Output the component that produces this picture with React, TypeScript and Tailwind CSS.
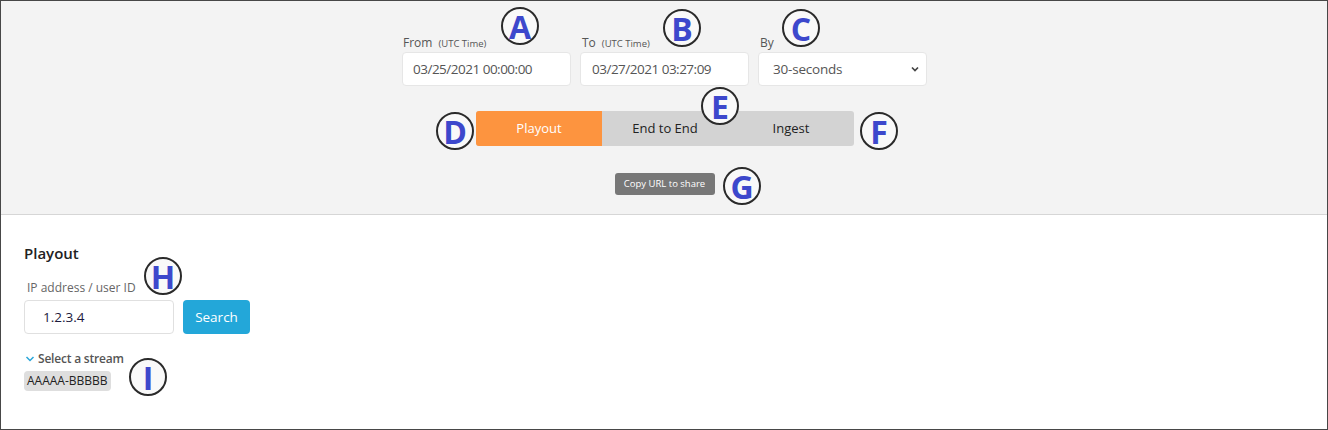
import React from "react";

const Mark = ({ l, x, y }: { l: string; x: number; y: number }) => (
  <div
    className="absolute w-[38px] h-[38px] rounded-full border-2 border-[#2a2a2a] bg-[#f9f9f9] flex items-center justify-center text-[32px] font-bold text-[#3d48cc] leading-none"
    style={{ left: x - 19, top: y - 19, fontFamily: "'Open Sans', sans-serif" }}
  >
    <span className="mt-[1px]">{l}</span>
  </div>
);

export default function App() {
  return (
    <div
      className="relative w-[1328px] h-[430px] border border-[#474747] bg-white overflow-hidden"
      style={{ fontFamily: "'Open Sans', 'Noto Sans', sans-serif" }}
    >
      <div className="h-[214px] bg-[#f3f3f3] border-b border-[#d6d6d6] flex flex-col items-center pt-[33px]">
        <div className="flex gap-[9px] ml-[1px]">
          <div className="flex flex-col w-[169px]">
            <div className="h-[18px] flex items-baseline pl-[1px] text-[#555]">
              <span className="text-[12px]">From</span>
              <span className="text-[9.5px] ml-[6px]">(UTC Time)</span>
            </div>
            <div className="h-[34px] bg-white rounded-[4px] border border-[#e6e6e6] flex items-center pl-[10px] text-[13.5px] text-[#555] tracking-[-0.5px]">
              03/25/2021 00:00:00
            </div>
          </div>
          <div className="flex flex-col w-[169px]">
            <div className="h-[18px] flex items-baseline pl-[2px] text-[#555]">
              <span className="text-[12px]">To</span>
              <span className="text-[9.5px] ml-[6px]">(UTC Time)</span>
            </div>
            <div className="h-[34px] bg-white rounded-[4px] border border-[#e6e6e6] flex items-center pl-[11px] text-[13.5px] text-[#555] tracking-[-0.5px]">
              03/27/2021 03:27:09
            </div>
          </div>
          <div className="flex flex-col w-[169px]">
            <div className="h-[18px] flex items-baseline pl-[2px] text-[#555]">
              <span className="text-[12px]">By</span>
            </div>
            <div className="h-[34px] bg-white rounded-[4px] border border-[#e6e6e6] flex items-center justify-between pl-[14px] pr-[6px] text-[13.5px] text-[#555] tracking-[-0.2px]">
              <span>30-seconds</span>
              <svg width="10" height="10" viewBox="0 0 10 10">
                <path d="M2 3.5 L5 6.5 L8 3.5" stroke="#444" strokeWidth="1.7" fill="none" />
              </svg>
            </div>
          </div>
        </div>
        <div className="mt-[25px] flex w-[378px] h-[35px] rounded-[3px] overflow-hidden bg-[#d3d3d3] text-[13px] ml-[2px]">
          <div className="w-[126px] bg-[#fd943f] text-white flex items-center justify-center">Playout</div>
          <div className="w-[126px] text-[#222] flex items-center justify-center">End to End</div>
          <div className="w-[126px] text-[#222] flex items-center justify-center">Ingest</div>
        </div>
        <div className="mt-[27px] h-[22px] w-[100px] rounded-[3px] bg-[#777] text-white text-[9.5px] flex items-center justify-center ml-[1px]">
          Copy URL to share
        </div>
      </div>
      <div className="pl-[23px] pt-[28px]">
        <div className="text-[15px] font-semibold text-[#222] leading-[20px]">Playout</div>
        <div className="mt-[17px] ml-[3px] text-[12px] text-[#666] leading-[16px]">IP address / user ID</div>
        <div className="mt-[4px] flex gap-[9px]">
          <div className="w-[150px] h-[34px] border border-[#e0e0e0] rounded-[4px] flex items-center pl-[18px] text-[13.5px] text-[#1c1a3c]">
            1.2.3.4
          </div>
          <div className="w-[67px] h-[34px] rounded-[4px] bg-[#23a7d9] text-white text-[13.5px] flex items-center justify-center">
            Search
          </div>
        </div>
        <div className="mt-[17px] flex items-center text-[12px] font-semibold text-[#555] leading-[16px] tracking-[-0.2px]">
          <svg width="10" height="8" viewBox="0 0 10 8" className="ml-[1px] mr-[3px]">
            <path d="M1.5 2 L5 5.5 L8.5 2" stroke="#2aa6d8" strokeWidth="1.5" fill="none" />
          </svg>
          Select a stream
        </div>
        <div className="mt-[1px] inline-flex h-[20px] items-center px-[3px] rounded-[4px] bg-[#dedede] text-[12px] text-[#222]">
          AAAAA-BBBBB
        </div>
      </div>
      <Mark l="A" x={519} y={25} />
      <Mark l="B" x={681} y={27} />
      <Mark l="C" x={800} y={27} />
      <Mark l="D" x={454} y={130} />
      <Mark l="E" x={719} y={105} />
      <Mark l="F" x={878} y={130} />
      <Mark l="G" x={741} y={185} />
      <Mark l="H" x={162} y={275} />
      <Mark l="I" x={147} y={376} />
    </div>
  );
}
